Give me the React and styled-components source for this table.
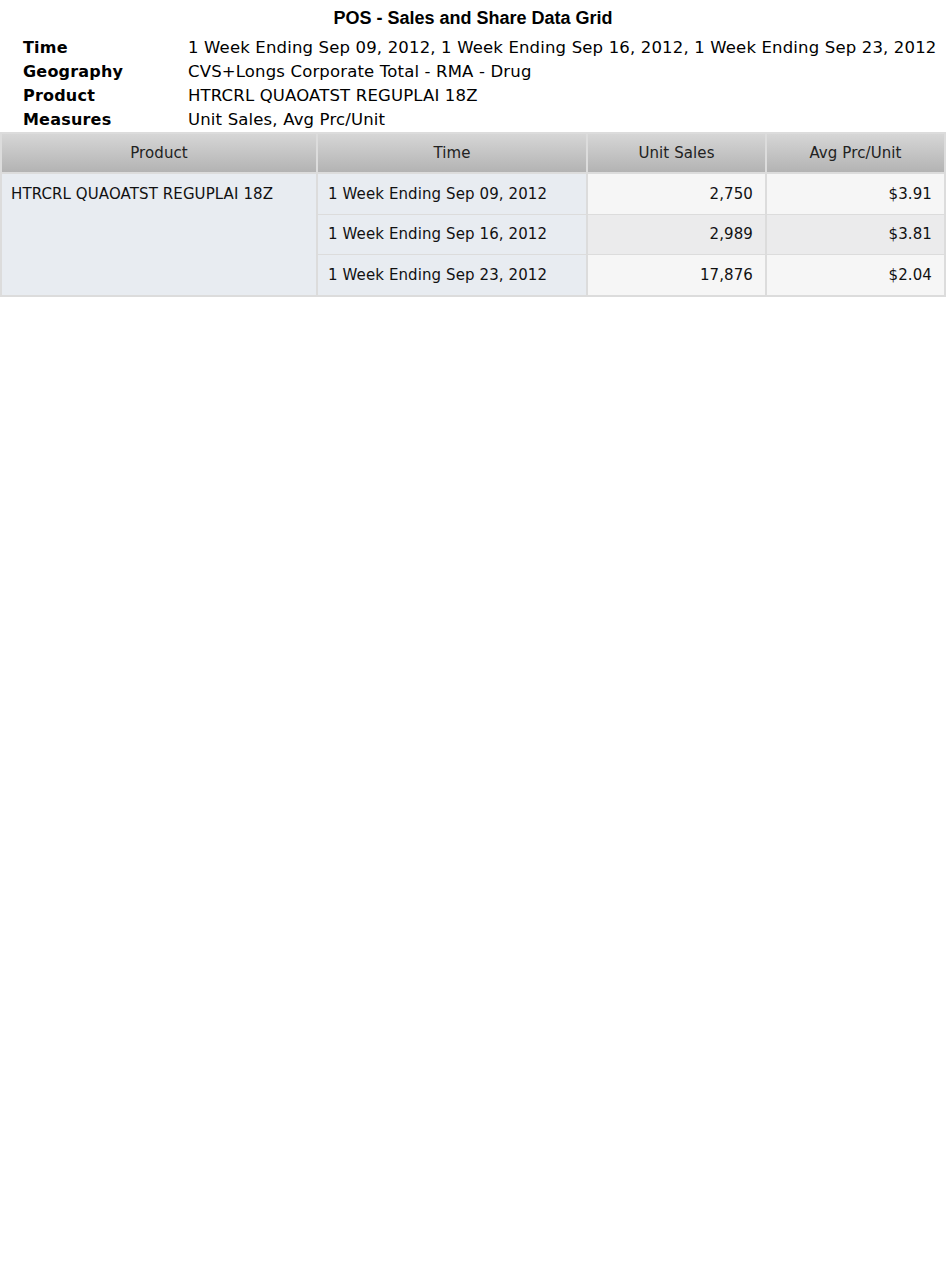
import React from "react";
import styled, { createGlobalStyle } from "styled-components";

const Global = createGlobalStyle`
  html, body { margin: 0; padding: 0; background: #fff; }
  body { font-family: "DejaVu Sans", Verdana, sans-serif; color: #000; }
`;

const Page = styled.div`
  width: 946px;
  display: flex;
  flex-direction: column;
`;

const Title = styled.h1`
  margin: 0;
  padding-top: 7px;
  height: 22px;
  text-align: center;
  font-family: "Liberation Sans", Arial, sans-serif;
  font-size: 18px;
  font-weight: bold;
  line-height: 22px;
`;

const Info = styled.div`
  display: grid;
  grid-template-columns: 165px 1fr;
  padding: 7px 0 0 23px;
`;

const Label = styled.div`
  font-weight: bold;
  font-size: 16px;
  letter-spacing: 0.2px;
  line-height: 24px;
  height: 24px;
`;

const Value = styled.div`
  font-size: 16.5px;
  letter-spacing: 0.16px;
  line-height: 24px;
  height: 24px;
  white-space: nowrap;
`;

const Table = styled.table`
  width: 946px;
  border-collapse: collapse;
  table-layout: fixed;
  font-size: 15px;
  letter-spacing: 0.1px;
  border: 2px solid #dcdcdc;
`;

const Th = styled.th`
  height: 37px;
  padding: 0 0 1px;
  font-weight: normal;
  color: #222;
  background: linear-gradient(#d6d6d6, #b3b3b3);
  border: 2px solid #dcdcdc;
  text-align: center;
`;

const Td = styled.td`
  height: 39.6px;
  padding: ${(p) => (p.$top ? "11px" : "0")} ${(p) => (p.$num ? "12px" : "10px")} 0 ${(p) => (p.$top ? "9px" : "10px")};
  border: 2px solid #dcdcdc;
  border-top-width: 1px;
  border-bottom-width: 1px;
  color: #111;
  text-align: ${(p) => (p.$num ? "right" : "left")};
  vertical-align: ${(p) => (p.$top ? "top" : "middle")};
  background: ${(p) =>
    p.$dim ? "#e8ecf1" : p.$alt ? "#ebebec" : "#f6f6f6"};
  white-space: nowrap;
`;

const rows = [
  { time: "1 Week Ending Sep 09, 2012", units: "2,750", price: "$3.91" },
  { time: "1 Week Ending Sep 16, 2012", units: "2,989", price: "$3.81" },
  { time: "1 Week Ending Sep 23, 2012", units: "17,876", price: "$2.04" },
];

export default function App() {
  return (
    <Page>
      <Global />
      <Title>POS - Sales and Share Data Grid</Title>
      <Info>
        <Label>Time</Label>
        <Value>
          1 Week Ending Sep 09, 2012, 1 Week Ending Sep 16, 2012, 1 Week Ending Sep 23, 2012
        </Value>
        <Label>Geography</Label>
        <Value>CVS+Longs Corporate Total - RMA - Drug</Value>
        <Label>Product</Label>
        <Value>HTRCRL QUAOATST REGUPLAI 18Z</Value>
        <Label>Measures</Label>
        <Value>Unit Sales, Avg Prc/Unit</Value>
      </Info>
      <Table>
        <colgroup>
          <col style={{ width: 316 }} />
          <col style={{ width: 270 }} />
          <col style={{ width: 179 }} />
          <col style={{ width: 179 }} />
        </colgroup>
        <thead>
          <tr>
            <Th>Product</Th>
            <Th>Time</Th>
            <Th>Unit Sales</Th>
            <Th>Avg Prc/Unit</Th>
          </tr>
        </thead>
        <tbody>
          {rows.map((r, i) => (
            <tr key={r.time}>
              {i === 0 && (
                <Td $dim $top rowSpan={3}>
                  HTRCRL QUAOATST REGUPLAI 18Z
                </Td>
              )}
              <Td $dim>{r.time}</Td>
              <Td $num $alt={i === 1}>{r.units}</Td>
              <Td $num $alt={i === 1}>{r.price}</Td>
            </tr>
          ))}
        </tbody>
      </Table>
    </Page>
  );
}
